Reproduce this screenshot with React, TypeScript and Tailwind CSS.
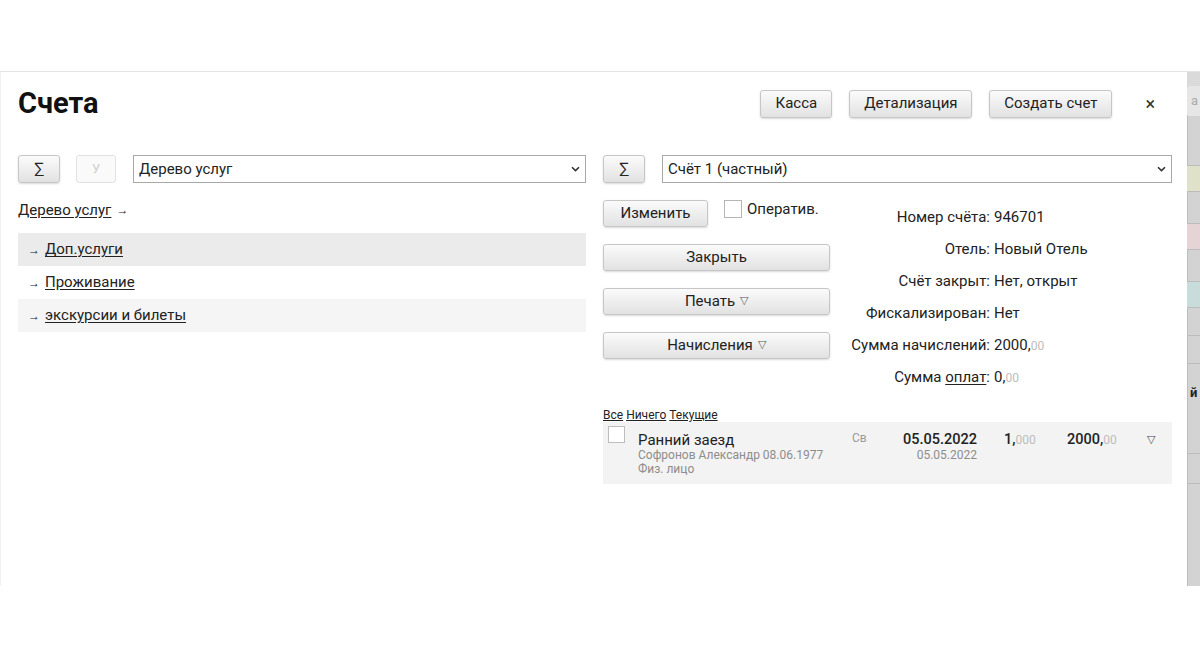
import React from "react";

function Btn({ children, className = "" }: { children: React.ReactNode; className?: string }) {
  return (
    <div
      className={
        "flex items-center justify-center rounded-[3px] border border-[#c6c6c6] bg-linear-to-b from-[#fbfbfb] to-[#e2e2e2] text-[15px] text-[#222] shadow-[0_1px_2px_rgba(0,0,0,0.15)] " +
        className
      }
    >
      {children}
    </div>
  );
}

function Chevron() {
  return (
    <svg width="9" height="6" viewBox="0 0 9 6" className="shrink-0">
      <path d="M1 1.2 L4.5 4.6 L8 1.2" stroke="#333" strokeWidth="1.6" fill="none" />
    </svg>
  );
}

function Select({ text }: { text: string }) {
  return (
    <div className="flex h-[28px] flex-1 items-center justify-between border border-[#a9a9a9] bg-white pl-[5px] pr-[5px] text-[15px] text-[#222]">
      <span>{text}</span>
      <Chevron />
    </div>
  );
}

function Tri() {
  return <span className="ml-[5px] text-[11px] text-[#555]">▽</span>;
}

function InfoRow({ label, children }: { label: React.ReactNode; children: React.ReactNode }) {
  return (
    <div className="flex h-[32px] items-center text-[15px] text-[#222]">
      <div className="w-[160px] whitespace-nowrap text-right">{label}</div>
      <div className="ml-[4px] whitespace-nowrap">{children}</div>
    </div>
  );
}

export default function App() {
  return (
    <div className="h-[655px] w-[1200px] overflow-hidden bg-white font-[Roboto,Arial,sans-serif] text-[#222]">
      <div className="h-[71px]" />
      <div className="flex h-[515px] border-t border-[#e3e3e3]">
        {/* modal */}
        <div className="w-[1187px] bg-white shadow-[inset_1px_0_0_#f0f0f0]">
          {/* header */}
          <div className="flex h-[63px] items-center pl-[18px] pr-[32px]">
            <div className="text-[29px] font-bold leading-none text-[#111]">Счета</div>
            <div className="flex-1" />
            <Btn className="h-[28px] w-[72px]">Касса</Btn>
            <Btn className="ml-[17px] h-[28px] w-[123px]">Детализация</Btn>
            <Btn className="ml-[17px] h-[28px] w-[123px]">Создать счет</Btn>
            <div className="ml-[33px] text-[18px] leading-none text-[#333]">×</div>
          </div>

          <div className="mt-[20px] flex pl-[18px] pr-[15px]">
            {/* left column */}
            <div className="w-[568px]">
              <div className="flex h-[28px] items-center">
                <Btn className="h-[28px] w-[42px] text-[16px]">∑</Btn>
                <div className="ml-[16px] flex h-[28px] w-[40px] items-center justify-center rounded-[3px] border border-[#e2e2e2] bg-[#fafafa] text-[13px] text-[#d0d0d0]">
                  У
                </div>
                <div className="ml-[17px] flex flex-1">
                  <Select text="Дерево услуг" />
                </div>
              </div>
              <div className="mt-[17px] flex h-[20px] items-center text-[15px]">
                <span className="underline underline-offset-2">Дерево услуг</span>
                <span className="ml-[5px] text-[12px]">→</span>
              </div>
              <div className="mt-[13px]">
                {[
                  { t: "Доп.услуги", bg: "bg-[#ebebeb]" },
                  { t: "Проживание", bg: "bg-white" },
                  { t: "экскурсии и билеты", bg: "bg-[#f5f5f5]" },
                ].map((r) => (
                  <div key={r.t} className={"flex h-[33px] items-center pl-[10px] text-[15px] " + r.bg}>
                    <span className="text-[12px]">→</span>
                    <span className="ml-[5px] underline underline-offset-2">{r.t}</span>
                  </div>
                ))}
              </div>
            </div>

            {/* right column */}
            <div className="ml-[17px] w-[569px]">
              <div className="flex h-[28px] items-center">
                <Btn className="h-[28px] w-[42px] text-[16px]">∑</Btn>
                <div className="ml-[17px] flex flex-1">
                  <Select text="Счёт 1 (частный)" />
                </div>
              </div>

              <div className="mt-[17px] flex">
                <div className="w-[227px]">
                  <div className="flex h-[27px] items-center">
                    <Btn className="h-[27px] w-[105px]">Изменить</Btn>
                    <div className="ml-[16px] h-[18px] w-[18px] -translate-y-[5px] border border-[#b5b5b5] bg-white" />
                    <span className="ml-[5px] -translate-y-[4px] text-[15px]">Оператив.</span>
                  </div>
                  <Btn className="mt-[17px] h-[27px] w-[227px]">Закрыть</Btn>
                  <Btn className="mt-[17px] h-[27px] w-[227px]">
                    Печать
                    <Tri />
                  </Btn>
                  <Btn className="mt-[17px] h-[27px] w-[227px]">
                    Начисления
                    <Tri />
                  </Btn>
                </div>
                <div className="pt-[1px]">
                  <InfoRow label="Номер счёта:">946701</InfoRow>
                  <InfoRow label="Отель:">Новый Отель</InfoRow>
                  <InfoRow label="Счёт закрыт:">Нет, открыт</InfoRow>
                  <InfoRow label="Фискализирован:">Нет</InfoRow>
                  <InfoRow label="Сумма начислений:">
                    2000,<span className="text-[12px] text-[#bdbdbd]">00</span>
                  </InfoRow>
                  <InfoRow
                    label={
                      <>
                        Сумма <span className="underline underline-offset-2">оплат</span>:
                      </>
                    }
                  >
                    0,<span className="text-[12px] text-[#bdbdbd]">00</span>
                  </InfoRow>
                </div>
              </div>

              <div className="mt-[15px] flex h-[14px] items-center text-[12px] leading-none">
                <span className="underline">Все</span>
                <span className="ml-[3px] underline">Ничего</span>
                <span className="ml-[3px] underline">Текущие</span>
              </div>

              <div className="flex h-[62px] bg-[#f3f3f3] pl-[5px]">
                <div className="mt-[4px] h-[17px] w-[17px] border border-[#bdbdbd] bg-white" />
                <div className="ml-[13px] w-[214px] pt-[10px]">
                  <div className="text-[15px] leading-[16px] text-[#222]">Ранний заезд</div>
                  <div className="text-[12px] leading-[14px] text-[#8d8d8d]">Софронов Александр 08.06.1977</div>
                  <div className="text-[12px] leading-[14px] text-[#8d8d8d]">Физ. лицо</div>
                </div>
                <div className="w-[50px] pt-[9px] text-[12px] leading-[14px] text-[#9a9a9a]">Св</div>
                <div className="w-[75px] pt-[10px] text-right">
                  <div className="text-[14.5px] font-medium leading-[16px] text-[#222]">05.05.2022</div>
                  <div className="text-[12px] leading-[14px] text-[#8d8d8d]">05.05.2022</div>
                </div>
                <div className="ml-[27px] w-[63px] pt-[10px] text-[14.5px] leading-[16px]">
                  <span className="font-medium">1,</span>
                  <span className="text-[12px] text-[#bdbdbd]">000</span>
                </div>
                <div className="w-[80px] pt-[10px] text-[14.5px] leading-[16px]">
                  <span className="font-medium">2000,</span>
                  <span className="text-[12px] text-[#bdbdbd]">00</span>
                </div>
                <div className="pt-[10px] text-[11px] leading-[16px] text-[#444]">▽</div>
              </div>
            </div>
          </div>
        </div>

        {/* right background strip */}
        <div className="flex flex-1 flex-col bg-[#d3d3d3] shadow-[inset_1px_0_0_#bdbdbd]">
          <div className="h-[14px] bg-[#dadada]" />
          <div className="h-[30px] overflow-hidden rounded-l-[2px] bg-[#e6e6e6] pl-[4px] text-[13px] leading-[30px] text-[#aaa]">а</div>
          <div className="h-[50px] border-b border-[#bcbcbc]" />
          <div className="h-[26px] border-b border-[#bcbcbc] bg-[#dfe2c9]" />
          <div className="h-[32px] border-b border-[#bcbcbc]" />
          <div className="h-[26px] border-b border-[#bcbcbc] bg-[#e6d3d6]" />
          <div className="h-[32px] border-b border-[#bcbcbc]" />
          <div className="h-[26px] border-b border-[#bcbcbc] bg-[#c9dcdc]" />
          <div className="h-[28px] border-b border-[#bcbcbc]" />
          <div className="h-[28px] border-b border-[#bcbcbc]" />
          <div className="h-[60px] pl-[3px] pt-[22px] text-[13px] font-bold leading-none text-[#222]">й</div>
          <div className="h-[30px] border-b border-[#bcbcbc]" />
          <div className="h-[30px] border-b border-[#bcbcbc]" />
          <div className="flex-1" />
        </div>
      </div>
    </div>
  );
}
